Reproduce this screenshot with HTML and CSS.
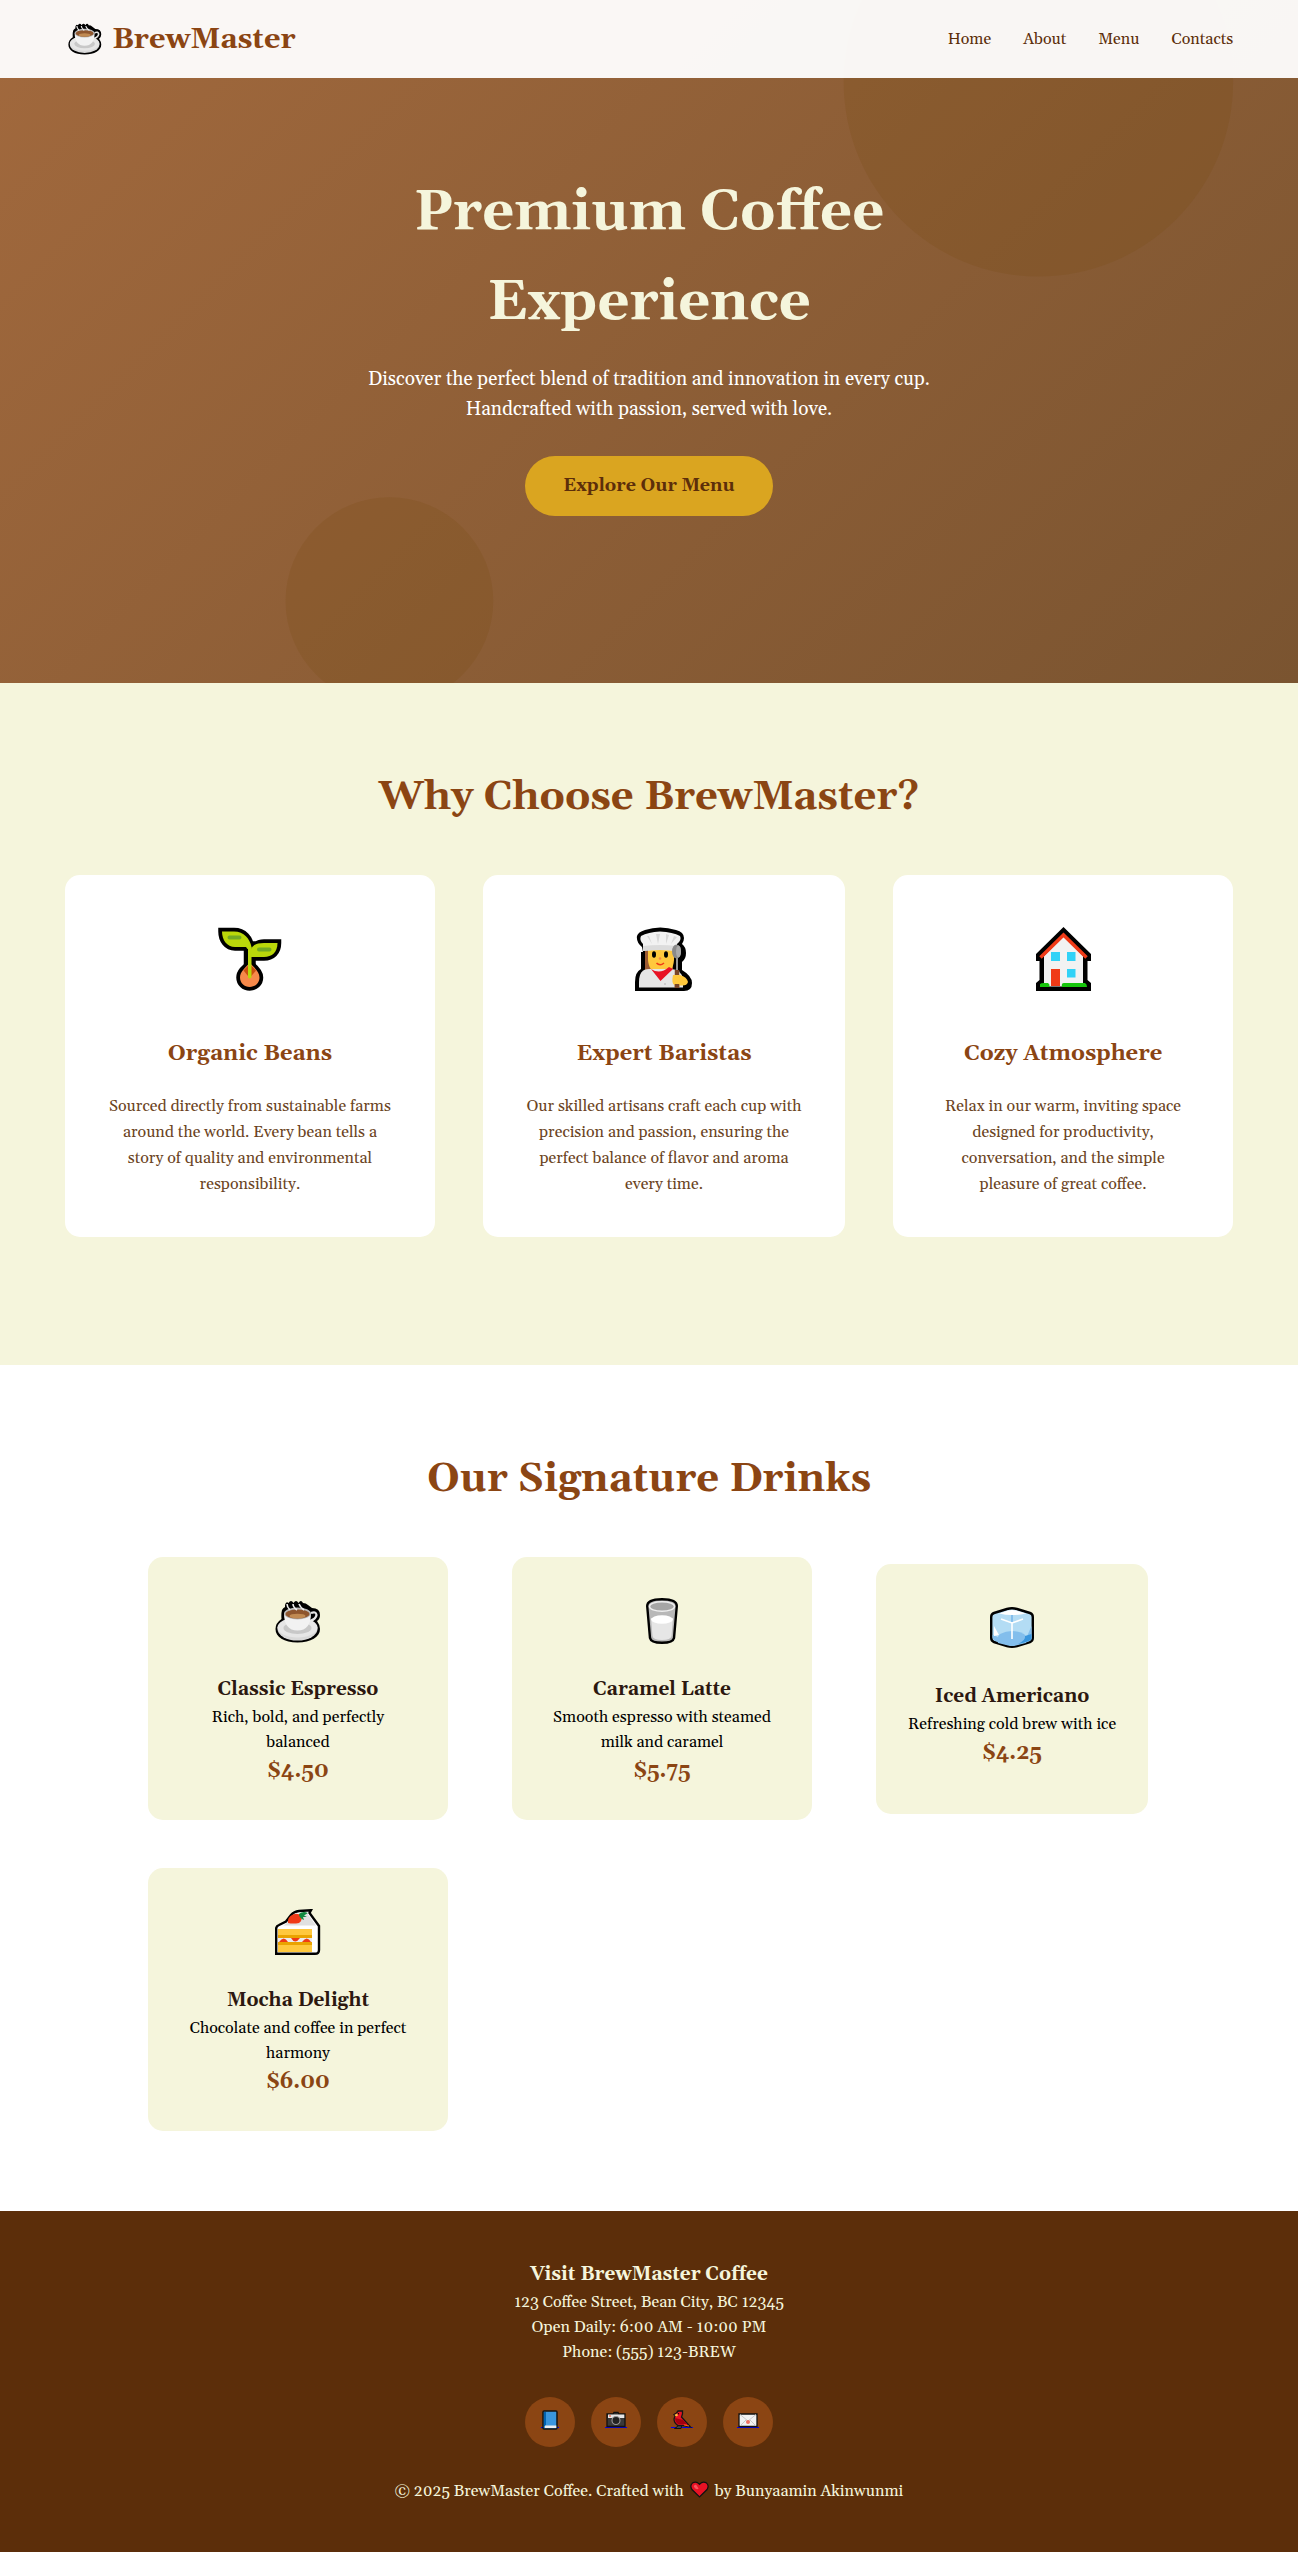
FILE: index.html
```html
<!DOCTYPE html>
<html lang="en">
<head>
<meta charset="utf-8">
<meta name="viewport" content="width=device-width, initial-scale=1">
<title>BrewMaster Coffee</title>
<link rel="stylesheet" href="styles.css">
</head>
<body>
<svg class="sprite" aria-hidden="true">
  <symbol id="cup" viewBox="0 0 46 43">
    <path d="M10 11V5Q11 1 13.500 3Q16-1 18.500 3Q21-1 23.500 3Q26-1 28 3Q31 3 33 5L37 8Q45 8 45 15Q45 19 42 21Q45 25 45 29C45 37 36 42.500 22.500 42.500S.5 37 .5 29Q.5 23 6.500 19Q6 14 7 10Q8 8 10 7Z" fill="#000"/>
    <ellipse cx="22.500" cy="29" rx="20" ry="11.500" fill="#d9d9d9"/>
    <ellipse cx="22.500" cy="27.500" rx="20" ry="10" fill="#e6e6e6"/>
    <ellipse cx="22.500" cy="28" rx="14" ry="6" fill="#c8c8c8"/>
    <path d="M36 13Q41 11 41.500 15Q41 19 35 21" fill="none" stroke="#e6e6e6" stroke-width="2.200"/>
    <path d="M9 13Q9 30.500 22.500 30.500T36 13Z" fill="#f2f2f2"/>
    <ellipse cx="22.500" cy="13.500" rx="13.500" ry="6" fill="#bbb"/>
    <ellipse cx="22.500" cy="14" rx="12" ry="4.500" fill="#8e562e"/>
    <ellipse cx="22.500" cy="16" rx="8" ry="2.300" fill="#c08a52"/>
    <path d="M12 4Q12 7 15 10M18 4Q18 7 22 10M24 4Q25 7 29 10" fill="none" stroke="#eee" stroke-width="1.600"/>
  </symbol>
</svg>

<header class="site-header">
  <a class="logo" href="#home"><svg class="logo-icon" viewBox="0 0 46 43" aria-hidden="true"><use href="#cup"/></svg><span>BrewMaster</span></a>
  <nav>
    <ul class="nav-list">
      <li><a href="#home">Home</a></li>
      <li><a href="#about">About</a></li>
      <li><a href="#menu">Menu</a></li>
      <li><a href="#contacts">Contacts</a></li>
    </ul>
  </nav>
</header>

<main>
  <section class="hero" id="home">
    <svg class="hero-pattern" viewBox="0 0 100 100" preserveAspectRatio="xMidYMid slice" aria-hidden="true">
      <circle cx="80" cy="30" r="15"/><circle cx="30" cy="70" r="8"/>
    </svg>
    <div class="hero-content">
      <h1>Premium Coffee Experience</h1>
      <p>Discover the perfect blend of tradition and innovation in every cup. Handcrafted with passion, served with love.</p>
      <a class="cta" href="#menu">Explore Our Menu</a>
    </div>
  </section>

  <section class="features" id="about">
    <h2>Why Choose BrewMaster?</h2>
    <div class="feature-grid">
      <article class="feature-card">
        <div class="feature-icon">
          <svg width="64" height="64" viewBox="0 0 64 64" aria-hidden="true">
            <g stroke="#000" stroke-width="7.500" stroke-linejoin="miter">
              <path d="M4 4.500H16C26 4.500 32 12 32 20H17C9 20 4 13 4 4.500Z"/>
              <path d="M59.500 16C59.500 25 54 30 46 30H33C33 22 38 16 46 16Z"/>
              <path d="M29.500 18H34V40H29.500Z"/>
              <path d="M31.700 37C37 41 41.500 45 41.500 50.500C41.500 56 37 60 31.700 60S22 56 22 50.500C22 45 27 41 31.700 37Z"/>
            </g>
            <path d="M31.700 36C37 41 41.500 45 41.500 50.500C41.500 56 37 60 31.700 60S22 56 22 50.500C22 45 27 41 31.700 36Z" fill="#f7894a"/>
            <path d="M31.700 37L38 43.500L31.700 51L25.500 43.500Z" fill="#ca5010"/>
            <path d="M4 4.500H16C26 4.500 32 12 33.500 20V22H29.500L28 20H17C9 20 4 13 4 4.500Z" fill="#bad80a"/>
            <path d="M59.500 16C59.500 25 54 30 46 30H33V22C35 18 39 16 46 16Z" fill="#bad80a"/>
            <path d="M30 20H33.500V50.500Q31.700 52.500 30 50.500Z" fill="#bad80a"/>
            <path d="M11.500 10.500H21.500M41 22.500H51.500" stroke="#73aa24" stroke-width="4" stroke-linecap="round"/>
          </svg>
        </div>
        <h3>Organic Beans</h3>
        <p>Sourced directly from sustainable farms around the world. Every bean tells a story of quality and environmental responsibility.</p>
      </article>
      <article class="feature-card">
        <div class="feature-icon">
          <svg width="58" height="64" viewBox="0 0 58 64" aria-hidden="true">
            <path d="M8 25L7 20Q1 15 2 9Q3 5 10 3Q25-2 41 3Q49 5 49 11Q49 14 47 17Q51 20 51 26Q51 32 47 35V43Q57 49 57 56Q57 64 49 64H0V55Q0 45 6 42V25Z"/>
            <path d="M10 24H38V50H10Z" fill="#9c5a32"/>
            <path d="M13 22H39V33Q38 47 26 48Q14 46 13 33Z" fill="#ffc83d"/>
            <path d="M8 24V17Q4 13 6 9Q13 5 25 4.500Q38 5 45 9Q47 13 42 17V24Q25 22 8 24Z" fill="#f2f2f2"/>
            <path d="M8 19Q25 17 42 19V24Q25 22 8 24Z" fill="#dcdcdc"/>
            <path d="M12 9L17 17L14 9ZM21 7L23 17L25 7ZM31 7L31 17L34 8ZM39 9L36 17L42 10Z" fill="#d8d8d8"/>
            <path d="M4 60.500V55Q4 42 14 42H36Q46 42 48 52V60.500Z" fill="#e6e6e6"/>
            <path d="M16 42Q25 48 34 40L38 42L25.500 54Z" fill="#e81224"/>
            <ellipse cx="19" cy="27.500" rx="2" ry="3.300"/><ellipse cx="31" cy="27.500" rx="2" ry="3.300"/>
            <circle cx="25" cy="31.500" r="1.300" fill="#f7894a"/>
            <path d="M21.500 36Q25 39.500 29 36" fill="none" stroke="#f03a17" stroke-width="1.600"/>
            <path d="M42 30V45" stroke="#999" stroke-width="2"/>
            <ellipse cx="41.500" cy="24.500" rx="4.500" ry="7" fill="#8a8a8a"/>
            <ellipse cx="43.500" cy="24.500" rx="2.500" ry="6" fill="#aaa"/>
            <path d="M42 43V60.500" stroke="#7a4528" stroke-width="4.500"/>
            <path d="M38 48H45Q52 50 53 55Q52 59 46 58.500H40Q36 57 38 48Z" fill="#ffc83d"/>
            <path d="M42 57V61" stroke="#7a4528" stroke-width="4.500"/>
            <circle cx="30" cy="57" r=".8" fill="#aaa"/>
          </svg>
        </div>
        <h3>Expert Baristas</h3>
        <p>Our skilled artisans craft each cup with precision and passion, ensuring the perfect balance of flavor and aroma every time.</p>
      </article>
      <article class="feature-card">
        <div class="feature-icon">
          <svg width="55" height="64" viewBox="0 0 55 64" aria-hidden="true">
            <path d="M27.500 0L55 27V34H51.500V53L55 56V64H0V56L3.500 53V34H0V27Z"/>
            <path d="M27.500 9L47 29V59.500H8V29Z" fill="#f2f2f2"/>
            <path d="M4.500 30.500L27.500 8L50.500 30.500" fill="none" stroke="#f03a17" stroke-width="3.500"/>
            <path d="M15 25H24V34H15ZM31 25H39.500V34H31ZM31 42H39.500V50.500H31Z" fill="#31d2f7"/>
            <path d="M15 42H24V59H15Z" fill="#f03a17"/>
            <path d="M4 60V57Q5 56 8 56H12Q14 57 13.500 60ZM26 60Q25 56 28 56H49Q51 57 51 60Z" fill="#16c60c"/>
          </svg>
        </div>
        <h3>Cozy Atmosphere</h3>
        <p>Relax in our warm, inviting space designed for productivity, conversation, and the simple pleasure of great coffee.</p>
      </article>
    </div>
  </section>

  <section class="menu" id="menu">
    <h2>Our Signature Drinks</h2>
    <div class="drink-list">
      <article class="drink-card">
        <div class="drink-icon"><svg width="46" height="43" viewBox="0 0 46 43" aria-hidden="true"><use href="#cup"/></svg></div>
        <h3>Classic Espresso</h3>
        <p>Rich, bold, and perfectly balanced</p>
        <p class="price">$4.50</p>
      </article>
      <article class="drink-card">
        <div class="drink-icon">
          <svg width="32" height="46" viewBox="0 0 32 46" aria-hidden="true">
            <path d="M1.200 8C1.200 3 8 1.200 16 1.200S30.800 3 30.800 8L28 40Q27 44.800 16 44.800T4 40Z" fill="#b8b8b8" stroke="#000" stroke-width="2.400"/>
            <path d="M5 20L6.500 38Q7 42 16 42T25.500 38L27 20Z" fill="#e6e6e6"/>
            <ellipse cx="16" cy="8.500" rx="12.500" ry="4.800" fill="#a6a6a6" stroke="#efefef" stroke-width="1.500"/>
            <ellipse cx="16" cy="21.500" rx="10.800" ry="4.300" fill="#fff"/>
          </svg>
        </div>
        <h3>Caramel Latte</h3>
        <p>Smooth espresso with steamed milk and caramel</p>
        <p class="price">$5.75</p>
      </article>
      <article class="drink-card">
        <div class="drink-icon">
          <svg width="44" height="41" viewBox="0 0 44 41" aria-hidden="true">
            <path d="M17 2Q22 .5 27 2L40 6Q42.800 7 42.800 10V31Q42.800 34 40 35L27 39Q22 40.500 17 39L4 35Q1.200 34 1.200 31V10Q1.200 7 4 6Z" fill="#b3dcf4" stroke="#000" stroke-width="2.400"/>
            <path d="M8 36Q6 30 10 27Q22 21 34 27Q38 30 36 36L26 38.500Q22 39.500 18 38.500Z" fill="#83beec"/>
            <path d="M41.500 27V32Q41 34 36 35.500L27 37Q37 33 38 27L41.500 19ZM2.500 28Q10 30 15 37L5 34Q2.500 33 2.500 28Z" fill="#83beec"/>
            <path d="M41.500 27V32Q40 34.500 28 37Q36 33 35 29Z" fill="#3a96dd"/>
            <path d="M9 6.500L18 3.500Q22 2.500 26 3.500L36 6.500Q22 9.500 9 6.500ZM4 19L9 28L4 29Z" fill="#fff"/>
            <path d="M22 8V15" stroke="#83beec" stroke-width="2"/>
            <path d="M11 12L22 16L33 12M22 16V32" fill="none" stroke="#fff" stroke-width="1.600"/>
          </svg>
        </div>
        <h3>Iced Americano</h3>
        <p>Refreshing cold brew with ice</p>
        <p class="price">$4.25</p>
      </article>
      <article class="drink-card">
        <div class="drink-icon">
          <svg width="46" height="46" viewBox="0 0 46 46" aria-hidden="true">
            <path d="M1.200 44.800V19Q1.500 17 4 16L11 12.500L16 6Q19 2.500 24 2L36 1.200L34.500 4L44 17V41Q44 44.800 40 44.800Z" fill="#fff" stroke="#000" stroke-width="2.400"/>
            <path d="M8 16.500Q12 15 16 9Q24 3 32 4L41 16.500Z" fill="#e0e0e0"/>
            <path d="M3 20H37V43H3Z" fill="#ffc83d"/>
            <path d="M3 26H37V29H3ZM3 33H37V36H3Z" fill="#eaa300"/>
            <path d="M3 29H37V33H3Z" fill="#ececec"/>
            <path d="M4 33Q9 26 13 33ZM16 29H25Q20 36 16 29ZM27 33Q32 26 36 33Z" fill="#f03a17"/>
            <path d="M13 14Q12 8 18 5.500Q23 3.500 26 7Q28 11 24 14Q18 15 13 14Z" fill="#f03a17"/>
            <path d="M24 5Q28 1.500 33 4L29 6.500L32 8L28 8L29 11Q24 9 24 5Z" fill="#10893e"/>
          </svg>
        </div>
        <h3>Mocha Delight</h3>
        <p>Chocolate and coffee in perfect harmony</p>
        <p class="price">$6.00</p>
      </article>
    </div>
  </section>
</main>

<footer class="site-footer" id="contacts">
  <h3>Visit BrewMaster Coffee</h3>
  <p>123 Coffee Street, Bean City, BC 12345</p>
  <p>Open Daily: 6:00 AM - 10:00 PM</p>
  <p>Phone: (555) 123-BREW</p>
  <div class="social">
    <a href="#facebook" aria-label="Facebook">
      <svg width="22" height="20" viewBox="0 0 22 20" aria-hidden="true">
        <path d="M2 17.500H20" stroke="#00e"/>
        <rect x="4" y="1" width="14" height="18" rx="1" fill="#3a96dd" stroke="#151515" stroke-width="1.500"/>
        <path d="M5 2H7V16H5Z" fill="#0063b1"/><path d="M6 15.500H17.300V18H6Z" fill="#eee"/>
      </svg>
    </a>
    <a href="#instagram" aria-label="Instagram">
      <svg width="22" height="20" viewBox="0 0 22 20" aria-hidden="true">
        <path d="M0 17.500H22" stroke="#00e"/>
        <path d="M2 4H8L9 2.500H13L14 4H20V16.500H2Z" fill="#393939" stroke="#111" stroke-width="1.300"/>
        <path d="M3 4.500H19.300V8H3Z" fill="#e6e6e6"/><path d="M4 6H6" stroke="#f03a17"/>
        <circle cx="11" cy="10.500" r="4" fill="#222" stroke="#999" stroke-width="1.100"/>
      </svg>
    </a>
    <a href="#twitter" aria-label="Twitter">
      <svg width="22" height="20" viewBox="0 0 22 20" aria-hidden="true">
        <path d="M0 17.500H22" stroke="#00e"/>
        <path d="M7 15H11L10 18.500H3.500L6 17Z" fill="#444" stroke="#111"/>
        <path d="M3 4.500L5.500 3L7 1H11.500V4L10.500 7L19.500 17L12 15.500H7Q3 13 3 9L4 6Z" fill="#e81224" stroke="#151515" stroke-width="1.300"/>
        <path d="M4 8L12 10L16 14H7Q4 12 4 8Z" fill="#a4000f"/><path d="M3.500 5L6 3.500L7 5.500L5 6.500Z" fill="#ffc83d"/>
        <circle cx="7.500" cy="3.800" r=".7"/><path d="M13 15L18 16" stroke="#f7630c"/>
      </svg>
    </a>
    <a href="#email" aria-label="Email">
      <svg width="22" height="20" viewBox="0 0 22 20" aria-hidden="true">
        <path d="M0 17.500H22" stroke="#00e"/>
        <path d="M2 4H20V16.500H2Z" fill="#f2f2f2" stroke="#111" stroke-width="1.300"/>
        <path d="M3 4.500L11 11L19 4.500M3 16L9 10M19 16L13 10" fill="none" stroke="#c8c8c8"/>
        <circle cx="11" cy="12" r="2" fill="#f07060"/>
      </svg>
    </a>
  </div>
  <p>© 2025 BrewMaster Coffee. Crafted with <svg class="heart" viewBox="0 0 20 18" role="img" aria-label="love"><path d="M10 16.800L2 9Q-.5 5 2.500 2.200Q6.500-.5 10 3.500Q13.500-.5 17.500 2.200Q20.500 5 18 9Z" fill="#e81224" stroke="#111" stroke-width="1.300"/><path d="M4 6Q4 3.500 6.500 4L9 8Q7 10 4 6Z" fill="#f7555f"/></svg> by Bunyaamin Akinwunmi</p>
</footer>
</body>
</html>
```
FILE: styles.css
```css
:root {
  --brown: #8b4513;
  --dark: #5c2e0a;
  --cream: #f5f5dc;
  --gold: #daa520;
}

* {
  margin: 0;
  padding: 0;
  box-sizing: border-box;
}

body {
  position: relative;
  font-family: Gelasio, Georgia, "Liberation Serif", serif;
  font-size: 16px;
  line-height: 26px;
  color: #000;
  background: #fff;
}

a {
  text-decoration: none;
}

.sprite {
  position: absolute;
  width: 0;
  height: 0;
}

/* Header floats over the top of the hero */
.site-header {
  position: absolute;
  top: 0;
  left: 0;
  right: 0;
  z-index: 2;
  display: flex;
  justify-content: space-between;
  align-items: center;
  padding: 16px 5%;
  background: rgba(255, 255, 255, 0.95);
}

.logo {
  display: flex;
  align-items: center;
  gap: 10px;
  padding-left: 3px;
  font-size: 29px;
  line-height: 46px;
  font-weight: bold;
  color: var(--brown);
}

.logo span {
  padding-top: 2px;
  line-height: 44px;
}

.logo-icon {
  width: 34px;
  height: 32px;
}

.nav-list {
  display: flex;
  gap: 32px;
  list-style: none;
}

.nav-list a {
  color: var(--dark);
}

.hero {
  position: relative;
  display: flex;
  justify-content: center;
  padding: 168px 5% 167px;
  text-align: center;
  background: linear-gradient(135deg, #a2693d, #7a5430);
}

.hero-pattern {
  position: absolute;
  inset: 0;
  width: 100%;
  height: 100%;
  fill: #7a4a10;
  fill-opacity: 0.2;
}

.hero-content {
  position: relative;
  max-width: 600px;
}

.hero h1 {
  margin-bottom: 16px;
  font-size: 56px;
  line-height: 90px;
  color: var(--cream);
}

.hero p {
  margin-bottom: 32px;
  font-size: 19px;
  line-height: 30px;
  color: #fff;
}

.cta {
  display: inline-block;
  padding: 16px 38px;
  border-radius: 30px;
  font-size: 18px;
  line-height: 28px;
  font-weight: bold;
  color: var(--dark);
  background: var(--gold);
}

h2 {
  margin-bottom: 45px;
  padding-top: 3px;
  font-size: 40px;
  line-height: 64px;
  text-align: center;
  color: var(--brown);
}

.features {
  padding: 80px 5%;
  background: var(--cream);
}

.feature-grid {
  display: grid;
  grid-template-columns: 370fr 362fr 340fr;
  gap: 48px;
  margin-bottom: 48px;
}

.feature-card {
  padding: 40px;
  border-radius: 15px;
  text-align: center;
  background: #fff;
}

.feature-icon {
  display: flex;
  align-items: center;
  justify-content: center;
  height: 102px;
  margin-bottom: 18px;
  padding-bottom: 14px;
}

.feature-card h3 {
  margin-bottom: 20px;
  font-size: 22px;
  line-height: 38px;
  color: var(--brown);
}

.feature-card p {
  color: #6b4423;
}

.menu {
  padding: 80px 5%;
}

.drink-list {
  display: flex;
  flex-wrap: wrap;
  align-items: center;
  gap: 48px 64px;
  max-width: 1002px;
  margin: 0 auto;
}

.drink-card {
  max-width: 300px;
  min-height: 250px;
  padding: 32px;
  border-radius: 15px;
  text-align: center;
  background: var(--cream);
}

.drink-icon {
  display: flex;
  align-items: center;
  justify-content: center;
  height: 77px;
  margin-bottom: 8px;
  padding-bottom: 13px;
}

.drink-card h3,
.site-footer h3 {
  font-size: 19px;
  line-height: 31px;
}

.drink-card h3 {
  color: #2c1810;
}

.drink-card p {
  line-height: 25px;
}

.drink-card .price {
  font-size: 21px;
  line-height: 33px;
  font-weight: bold;
  color: var(--brown);
}

.site-footer {
  padding: 48px 5%;
  line-height: 25px;
  text-align: center;
  color: var(--cream);
  background: var(--dark);
}

.social {
  display: flex;
  justify-content: center;
  gap: 16px;
  margin: 32px 0;
}

.social a {
  display: flex;
  align-items: center;
  justify-content: center;
  width: 50px;
  height: 50px;
  padding-bottom: 4px;
  border-radius: 50%;
  background: var(--brown);
}

.heart {
  width: 19px;
  height: 17px;
  margin: 0 2px;
  vertical-align: -2px;
}
```
